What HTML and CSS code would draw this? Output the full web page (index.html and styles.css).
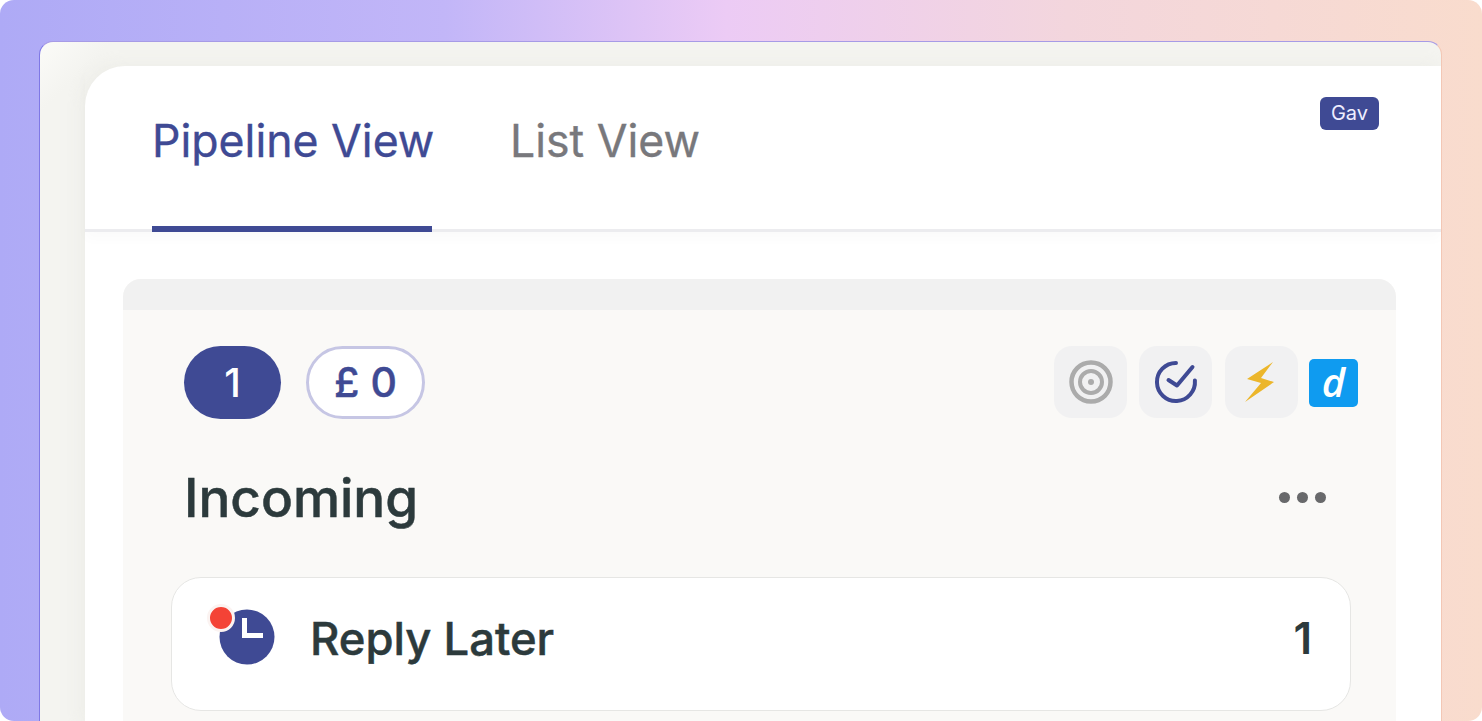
FILE: index.html
```html
<!DOCTYPE html>
<html lang="en">
<head>
<meta charset="utf-8">
<title>Pipeline View</title>
<link rel="stylesheet" href="styles.css">
</head>
<body>
<div class="backdrop">
  <div class="window">
    <main class="sheet">
      <header class="tabs">
        <nav class="tab-list">
          <a class="tab tab-active">Pipeline View</a>
          <a class="tab">List View</a>
        </nav>
        <span class="user-badge">Gav</span>
      </header>
      <section class="panel">
        <div class="panel-strip"></div>
        <div class="panel-body">
          <div class="toolbar">
            <div class="pills">
              <span class="pill pill-solid">1</span>
              <span class="pill pill-outline">£ 0</span>
            </div>
            <div class="tools">
              <span class="tool">
                <svg width="46" height="46" viewBox="0 0 46 46" fill="none" stroke="#ababab"><circle cx="23" cy="23" r="19.5" stroke-width="4.5"/><circle cx="23" cy="23" r="11" stroke-width="4"/><circle cx="23" cy="23" r="3" fill="#ababab" stroke="none"/></svg>
              </span>
              <span class="tool tool-check">
                <svg width="46" height="46" viewBox="0 0 46 46" fill="none" stroke="#3f4a94" stroke-width="4" stroke-linecap="round" stroke-linejoin="round"><path d="M23 4A19 19 0 1 0 41.9 21.5"/><path d="M15.5 21l8.5 5.5L39.5 8"/></svg>
              </span>
              <span class="tool tool-bolt">
                <svg class="bolt" width="30" height="40" viewBox="0 0 30 40"><path fill="#ecb62b" d="M28 0L2 17l14 4L0 40l29-20-13-4z"/></svg>
              </span>
              <span class="app-logo">d</span>
            </div>
          </div>
          <div class="title-row">
            <h1 class="title">Incoming</h1>
            <span class="dots"><i></i><i></i><i></i></span>
          </div>
          <div class="row-card">
            <span class="clock">
              <svg width="56" height="56" viewBox="0 0 56 56"><circle cx="28" cy="28" r="27.5" fill="#3f4a94"/><path d="M25.5 9v17.5H44" fill="none" stroke="#fff" stroke-width="5"/></svg>
              <span class="clock-dot"></span>
            </span>
            <span class="row-label">Reply Later</span>
            <span class="row-count">1</span>
          </div>
        </div>
      </section>
    </main>
  </div>
</div>
</body>
</html>
```

FILE: styles.css
```css
* { box-sizing: border-box; }
html, body { margin: 0; height: 721px; overflow: hidden; background: #fff; }
body { font-family: Inter, "Liberation Sans", sans-serif; }

.backdrop {
  height: 721px;
  padding: 41px 40px 0 39px;
  border-radius: 14px;
  overflow: hidden;
  background: linear-gradient(90deg, #aeaaf6 0%, #c2b6f8 30%, #eccbf5 49%, #f3d6dd 72%, #f9dccd 100%);
}
.window {
  height: 700px;
  padding: 24px 0 0 45px;
  border: 1px solid #8a80e8;
  border-color: #a79be6 #f3c7b5 transparent #7f78e6;
  border-bottom: 0;
  border-radius: 14px 14px 0 0;
  background: linear-gradient(135deg, #fbfbf8 0, #f4f4f0 50px);
  overflow: hidden;
}
.sheet {
  height: 660px;
  border-top-left-radius: 40px;
  background: #fff;
  box-shadow: -5px -3px 14px rgba(225, 225, 218, .3);
}

.tabs {
  position: relative;
  height: 166px;
  padding-left: 67px;
  border-bottom: 3px solid #ececef;
  box-shadow: 0 7px 12px rgba(0, 0, 0, .02);
}
.tab-list { display: flex; gap: 78px; height: 166px; }
.tab {
  height: 166px;
  padding-top: 50px;
  font-size: 44.6px;
  line-height: 50px;
  color: #78787c;
  white-space: nowrap;
  -webkit-text-stroke: .35px currentColor;
}
.tab-active {
  width: 280px;
  border-bottom: 6px solid #3f4a94;
  color: #3f4a94;
}
.user-badge {
  position: absolute;
  top: 31px;
  right: 62px;
  width: 59px;
  height: 33px;
  border-radius: 6px;
  background: #3f4a94;
  color: #eef;
  font-size: 20px;
  line-height: 33px;
  text-align: center;
}

.panel {
  margin: 47px 45px 0 38px;
  border-radius: 18px 18px 0 0;
  overflow: hidden;
  background: #faf9f7;
}
.panel-strip { height: 31px; background: #f1f1f1; }
.panel-body { height: 500px; padding: 36px 45px 0 48px; }

.toolbar {
  display: flex;
  justify-content: space-between;
  height: 73px;
  margin-right: -7px;
  padding-left: 13px;
}
.pills { display: flex; gap: 25px; }
.pill {
  height: 73px;
  border-radius: 37px;
  font-size: 40px;
  font-weight: 500;
  line-height: 73px;
  text-align: center;
}
.pill-solid { width: 97px; background: #3f4a94; color: #fff; }
.pill-outline {
  width: 119px;
  border: 3px solid #c6c6e4;
  background: #fff;
  color: #3f4a94;
  font-size: 41px;
  line-height: 67px;
  -webkit-text-stroke: .4px currentColor;
}

.tools { display: flex; align-items: center; height: 72px; }
.tool {
  display: flex;
  align-items: center;
  justify-content: center;
  width: 73px;
  height: 72px;
  border-radius: 18px;
  background: #f1f1f2;
}
.tool-check { margin-left: 12px; }
.tool-bolt { margin-left: 13px; }
.bolt { margin: -1px 3px 0 0; }
.app-logo {
  width: 49px;
  height: 48px;
  margin: 1px 0 0 11px;
  border-radius: 5px;
  background: #0f9bf0;
  color: #fff;
  font-family: "Open Sans", sans-serif;
  font-size: 40px;
  font-style: italic;
  font-weight: 600;
  line-height: 45px;
  text-align: center;
}

.title-row {
  display: flex;
  justify-content: space-between;
  align-items: center;
  height: 60px;
  margin-top: 49px;
  padding: 0 25px 0 13px;
}
.title {
  margin: 0;
  font-size: 53px;
  line-height: 60px;
  font-weight: 500;
  color: #2c3a3c;
  -webkit-text-stroke: .5px currentColor;
}
.dots { display: flex; gap: 7px; margin-top: -2px; }
.dots i { width: 11px; height: 11px; border-radius: 50%; background: #68696b; }

.row-card {
  display: flex;
  align-items: center;
  height: 134px;
  margin-top: 49px;
  padding: 0 38px 12px 47px;
  border: 1.5px solid #e6e6e4;
  border-radius: 30px;
  background: #fff;
}
.clock { position: relative; display: flex; width: 56px; height: 56px; margin-top: -2px; }
.clock-dot {
  position: absolute;
  top: -5px;
  left: -12px;
  width: 28px;
  height: 28px;
  border: 3px solid #fbf3f1;
  border-radius: 50%;
  background: #f44336;
}
.row-label {
  margin-left: 35px;
  font-size: 45.4px;
  font-weight: 500;
  color: #2c3a3c;
  -webkit-text-stroke: .5px currentColor;
}
.row-count { margin-left: auto; font-size: 44px; font-weight: 600; color: #2c3a3c; }
```
